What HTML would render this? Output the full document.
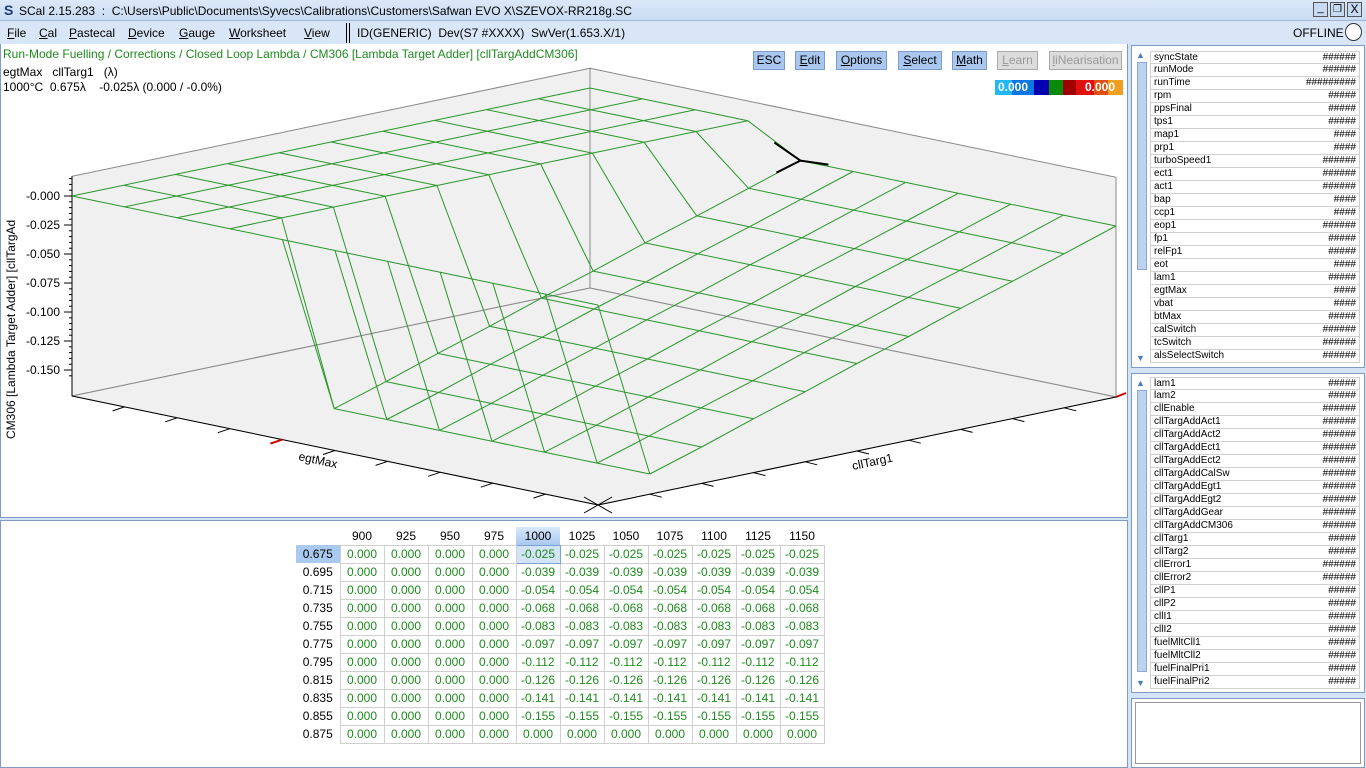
<!DOCTYPE html>
<html><head><meta charset="utf-8"><style>
*{box-sizing:border-box;margin:0;padding:0}
body{width:1366px;height:768px;overflow:hidden;background:#d4e3f6;font-family:"Liberation Sans","DejaVu Sans",sans-serif;font-size:12px;color:#000;position:relative}
.abs{position:absolute}
#title{left:0;top:0;width:1366px;height:21px;background:linear-gradient(#dbe8f8,#c9dcf3);border-bottom:1px solid #9fb6d6}
#menu{left:0;top:21px;width:1366px;height:23px;background:#d9e6f7}
.btn{position:absolute;top:51px;height:19px;background:#a9c7ef;border:1px solid #7b9cc8;font-size:12px;line-height:17px;text-align:center;color:#000}
.btn.dis{background:#dcdcdc;border-color:#aaa;color:#999}
.panel{position:absolute;background:#fff;border:1px solid #7e9bc4}
table{border-collapse:collapse}
#tbl{position:absolute;left:296px;top:527px;font-size:12px}
#tbl td{height:18px;text-align:center;padding:0}
#tbl td.c{border:1px solid #cfcfcf;color:#1f8a1f;width:44px}
#tbl td.h{width:44px}
#tbl td.r{width:44px;text-align:center}
.list{position:absolute;left:1150px;width:210px;font-size:10px}
.list div{height:13px;border:1px solid #d0d0d0;border-top:none;padding:0 3px;line-height:12px;display:flex;justify-content:space-between}
.list div:first-child{border-top:1px solid #d0d0d0}
.sb{position:absolute;left:1136px;width:12px;background:#fff}
</style></head><body>
<div id="title" class="abs">
 <div class="abs" style="left:4px;top:3px;width:10px;height:14px;font-weight:bold;color:#1f3b74;font-size:14px;line-height:14px">S</div>
 <div class="abs" style="left:19px;top:4px;font-size:12px">SCal 2.15.283 &nbsp;: &nbsp;C:\Users\Public\Documents\Syvecs\Calibrations\Customers\Safwan EVO X\SZEVOX-RR218g.SC</div>
 <div class="abs" style="left:1313px;top:2px;width:15px;height:15px;border:1px solid #555;background:#c7daf2;font-size:11px;line-height:11px;text-align:center">_</div>
 <div class="abs" style="left:1330px;top:2px;width:15px;height:15px;border:1px solid #555;background:#c7daf2;font-size:10px;line-height:13px;text-align:center">❐</div>
 <div class="abs" style="left:1347px;top:2px;width:15px;height:15px;border:1px solid #555;background:#c7daf2;font-size:12px;line-height:13px;text-align:center">X</div>
</div>
<div id="menu" class="abs" style="font-size:12px">
 <span class="abs" style="left:7px;top:5px"><u>F</u>ile</span>
 <span class="abs" style="left:39px;top:5px"><u>C</u>al</span>
 <span class="abs" style="left:69px;top:5px"><u>P</u>astecal</span>
 <span class="abs" style="left:128px;top:5px"><u>D</u>evice</span>
 <span class="abs" style="left:179px;top:5px"><u>G</u>auge</span>
 <span class="abs" style="left:229px;top:5px"><u>W</u>orksheet</span>
 <span class="abs" style="left:304px;top:5px"><u>V</u>iew</span>
 <span class="abs" style="left:346px;top:2px;width:4px;height:20px;border-left:1px solid #000;border-right:1px solid #000"></span>
 <span class="abs" style="left:357px;top:5px">ID(GENERIC) &nbsp;Dev(S7 #XXXX) &nbsp;SwVer(1.653.X/1)</span>
 <span class="abs" style="left:1293px;top:5px">OFFLINE</span>
 <span class="abs" style="left:1345px;top:2px;width:17px;height:18px;border:1px solid #333;border-radius:50%;background:#fff"></span>
</div>

<div class="panel" style="left:0;top:44px;width:1128px;height:474px;border-top:none">
<svg id="plot" width="1126" height="472" style="position:absolute;left:0;top:0"></svg>
</div>
<div class="abs" style="left:3px;top:47px;color:#1f8a1f;font-size:12px">Run-Mode Fuelling / Corrections / Closed Loop Lambda / CM306 [Lambda Target Adder] [cllTargAddCM306]</div>
<div class="abs" style="left:3px;top:65px;font-size:12px;line-height:15px">egtMax &nbsp;&nbsp;cllTarg1 &nbsp;&nbsp;(λ)<br>1000°C &nbsp;0.675λ &nbsp;&nbsp;&nbsp;-0.025λ (0.000 / -0.0%)</div>
<div class="btn" style="left:753px;width:32px">ESC</div>
<div class="btn" style="left:795px;width:30px"><u>E</u>dit</div>
<div class="btn" style="left:836px;width:51px"><u>O</u>ptions</div>
<div class="btn" style="left:898px;width:44px"><u>S</u>elect</div>
<div class="btn" style="left:952px;width:35px"><u>M</u>ath</div>
<div class="btn dis" style="left:997px;width:41px"><u>L</u>earn</div>
<div class="btn dis" style="left:1049px;width:73px"><u>l</u>iNearisation</div>
<div class="abs" style="left:995px;top:80px;width:128px;height:15px;display:flex;font-size:12px;font-weight:bold;color:#fff;line-height:15px">
 <div style="width:17px;background:#1fb8f0"></div><div style="width:22px;background:#0a78e0"></div><div style="width:15px;background:#0000b0"></div><div style="width:14px;background:#0a8a0a"></div><div style="width:13px;background:#a00000"></div><div style="width:18px;background:#e01010"></div><div style="width:14px;background:#e05010"></div><div style="width:15px;background:#f0a020"></div>
</div>
<div class="abs" style="left:998px;top:80px;font-size:12px;font-weight:bold;color:#fff;line-height:15px">0.000</div>
<div class="abs" style="left:1085px;top:80px;font-size:12px;font-weight:bold;color:#fff;line-height:15px">0.000</div>

<div class="panel" style="left:0;top:520px;width:1128px;height:248px"></div>
<table id="tbl"></table>

<div class="panel" style="left:1131px;top:45px;width:234px;height:323px"></div>
<div class="sb" style="top:50px;height:313px"><div style="height:10px;color:#4a7bc0;font-size:9px;line-height:10px">▲</div><div style="margin:2px 1px;height:208px;background:#bcd3f0;border:1px solid #8aa9d4"></div><div style="position:absolute;bottom:0;height:10px;color:#4a7bc0;font-size:9px;line-height:10px">▼</div></div>
<div class="list" id="l1" style="top:51px"></div>
<div class="panel" style="left:1131px;top:373px;width:234px;height:320px"></div>
<div class="sb" style="top:378px;height:310px"><div style="height:10px;color:#4a7bc0;font-size:9px;line-height:10px">▲</div><div style="margin:2px 1px;height:282px;background:#bcd3f0;border:1px solid #8aa9d4"></div><div style="position:absolute;bottom:0;height:10px;color:#4a7bc0;font-size:9px;line-height:10px">▼</div></div>
<div class="list" id="l2" style="top:377px"></div>
<div class="panel" style="left:1131px;top:698px;width:234px;height:70px"></div>
<div class="panel" style="left:1135px;top:702px;width:226px;height:62px;border-color:#999"></div>

<script>
var l1=[["syncState","######"],["runMode","######"],["runTime","#########"],["rpm","#####"],["ppsFinal","#####"],["tps1","#####"],["map1","####"],["prp1","####"],["turboSpeed1","######"],["ect1","######"],["act1","######"],["bap","####"],["ccp1","####"],["eop1","######"],["fp1","#####"],["relFp1","#####"],["eot","####"],["lam1","#####"],["egtMax","####"],["vbat","####"],["btMax","#####"],["calSwitch","######"],["tcSwitch","######"],["alsSelectSwitch","######"]];
var l2=[["lam1","#####"],["lam2","#####"],["cllEnable","######"],["cllTargAddAct1","######"],["cllTargAddAct2","######"],["cllTargAddEct1","######"],["cllTargAddEct2","######"],["cllTargAddCalSw","######"],["cllTargAddEgt1","######"],["cllTargAddEgt2","######"],["cllTargAddGear","######"],["cllTargAddCM306","######"],["cllTarg1","#####"],["cllTarg2","#####"],["cllError1","######"],["cllError2","######"],["cllP1","#####"],["cllP2","#####"],["cllI1","#####"],["cllI2","#####"],["fuelMltCll1","#####"],["fuelMltCll2","#####"],["fuelFinalPri1","#####"],["fuelFinalPri2","#####"]];
function fl(id,a){var h="";a.forEach(function(x){h+="<div><span>"+x[0]+"</span><span>"+x[1]+"</span></div>"});document.getElementById(id).innerHTML=h}
fl("l1",l1);fl("l2",l2);
var cols=[900,925,950,975,1000,1025,1050,1075,1100,1125,1150];
var rows=["0.675","0.695","0.715","0.735","0.755","0.775","0.795","0.815","0.835","0.855","0.875"];
var rv=["-0.025","-0.039","-0.054","-0.068","-0.083","-0.097","-0.112","-0.126","-0.141","-0.155","0.000"];
var h="<tr><td class='r'></td>";
cols.forEach(function(c,i){h+="<td class='h' style='"+(i==4?"background:linear-gradient(#d8e8fb,#a9c8ef)":"")+"'>"+c+"</td>"});h+="</tr>";
rows.forEach(function(r,ri){h+="<tr><td class='r' style='"+(ri==0?"background:#a9c9f0":"")+"'>"+r+"</td>";
cols.forEach(function(c,i){var v=i<4?"0.000":rv[ri];var st=(ri==0&&i==4)?"background:#d3e4f7;border:1px solid #7aa0d8":"";h+="<td class='c' style='"+st+"'>"+v+"</td>"});h+="</tr>"});
document.getElementById("tbl").innerHTML=h;

var zv=[-0.025,-0.03955,-0.054,-0.068,-0.083,-0.097,-0.112,-0.126,-0.141,-0.155,0];
function Z(i,r){return i<4?0:zv[r]}
function P(i,j,z){return [71+52.6*i+51.8*j,396+10.9*i-10.8*j-(z+0.1724)*1160-44]}
var s="";
function ln(a,b,c,w){s+="<line x1='"+a[0].toFixed(1)+"' y1='"+a[1].toFixed(1)+"' x2='"+b[0].toFixed(1)+"' y2='"+b[1].toFixed(1)+"' stroke='"+c+"' stroke-width='"+(w||1)+"'/>"}
var zf=-0.1724,zt=0.017;
function pg(pts,f){s+="<polygon points='"+pts.map(function(p){return p[0].toFixed(1)+","+p[1].toFixed(1)}).join(" ")+"' fill='"+f+"' stroke='#888'/>"}
pg([P(0,0,zf),P(0,10,zf),P(0,10,zt),P(0,0,zt)],"#f0f0f0");
pg([P(0,10,zf),P(10,10,zf),P(10,10,zt),P(0,10,zt)],"#f0f0f0");
pg([P(0,0,zf),P(0,10,zf),P(10,10,zf),P(10,0,zf)],"#f0f0f0");
for(var k=0;k<=7;k++){var z=-0.025*k;var p=P(0,0,z);if(z>zf){s+="<line x1='"+(p[0]-8)+"' y1='"+p[1]+"' x2='"+p[0]+"' y2='"+p[1]+"' stroke='#000'/>";if(k<7)s+="<text x='"+(p[0]-12)+"' y='"+(p[1]+4)+"' text-anchor='end' font-size='12' font-family='Liberation Sans'>-"+(0.025*k).toFixed(3)+"</text>"}}
for(var k=0;k<35;k++){var z=0.015-0.005*k;if(z<zf)break;var p=P(0,0,z);s+="<line x1='"+(p[0]-3)+"' y1='"+p[1]+"' x2='"+p[0]+"' y2='"+p[1]+"' stroke='#000'/>"}
ln(P(0,0,zt),P(0,0,zf),"#000");
ln(P(0,0,zf),P(10,0,zf),"#000");ln(P(10,0,zf),P(10,10,zf),"#000");
for(var i=1;i<10;i++){var a=P(i,0,zf);ln(a,[a[0]-12,a[1]+4],i==4?"#c00":"#000",i==4?2:1);var b=P(10,i,zf);ln(b,[b[0]+12,b[1]+3],"#000")}
var c=P(10,0,zf);ln([c[0]-14,c[1]-8],[c[0]+14,c[1]+8],"#000");ln([c[0]-14,c[1]+8],[c[0]+14,c[1]-8],"#000");
var e=P(10,10,zf);ln(e,[e[0]+10,e[1]-4],"#c00",2);
var g="#2a962a";
for(var r=0;r<11;r++){var j=10-r;for(var i=0;i<10;i++)ln(P(i,j,Z(i,r)),P(i+1,j,Z(i+1,r)),g)}
for(var i=0;i<11;i++){for(var r=0;r<10;r++)ln(P(i,10-r,Z(i,r)),P(i,9-r,Z(i,r+1)),g)}
var q=P(4,10,-0.025);ln(q,[q[0]-24,q[1]+12],"#000",2);ln(q,[q[0]-26,q[1]-18],"#000",2);ln(q,[q[0]+28,q[1]+4],"#000",2);
s+="<text transform='translate(14,395) rotate(-90)' font-size='12' font-family='Liberation Sans'>CM306 [Lambda Target Adder] [cllTargAd</text>";
s+="<text transform='translate(297,416) rotate(12)' font-size='12' font-family='Liberation Sans'>egtMax</text>";
s+="<text transform='translate(852,426) rotate(-12)' font-size='12' font-family='Liberation Sans'>cllTarg1</text>";
document.getElementById("plot").innerHTML=s;
</script>
</body></html>
